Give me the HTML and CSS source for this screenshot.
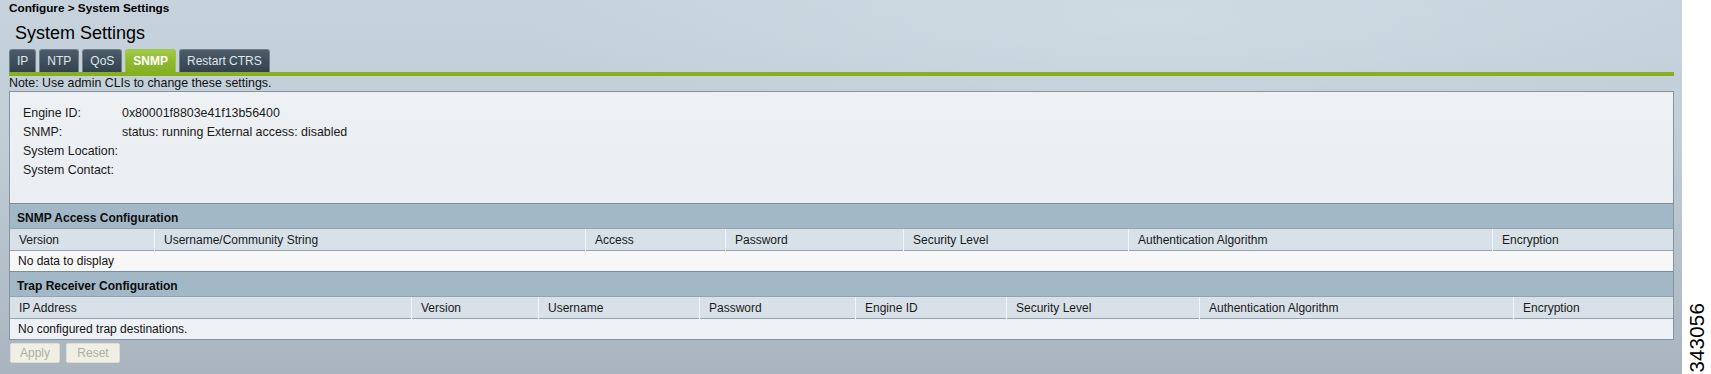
FILE: index.html
```html
<!DOCTYPE html>
<html>
<head>
<meta charset="utf-8">
<title>System Settings</title>
<link rel="stylesheet" href="styles.css">
</head>
<body>
<div class="shot">
  <div class="page">
    <div class="breadcrumb">Configure &gt; System Settings</div>
    <h1 class="title">System Settings</h1>
    <div class="tabs">
      <span class="tab">IP</span>
      <span class="tab">NTP</span>
      <span class="tab">QoS</span>
      <span class="tab active">SNMP</span>
      <span class="tab">Restart CTRS</span>
    </div>
    <div class="tabline"></div>
    <div class="note">Note: Use admin CLIs to change these settings.</div>
    <div class="box">
      <div class="info">
        <div class="lbl">Engine ID:</div><div class="val">0x80001f8803e41f13b56400</div>
        <div class="lbl">SNMP:</div><div class="val">status: running External access: disabled</div>
        <div class="lbl">System Location:</div><div class="val"></div>
        <div class="lbl">System Contact:</div><div class="val"></div>
      </div>
      <div class="sec-head">SNMP Access Configuration</div>
      <div class="cols cols-access">
        <div class="col">Version</div>
        <div class="col">Username/Community String</div>
        <div class="col">Access</div>
        <div class="col">Password</div>
        <div class="col">Security Level</div>
        <div class="col">Authentication Algorithm</div>
        <div class="col">Encryption</div>
      </div>
      <div class="empty empty-access">No data to display</div>
      <div class="sec-head">Trap Receiver Configuration</div>
      <div class="cols cols-trap">
        <div class="col">IP Address</div>
        <div class="col">Version</div>
        <div class="col">Username</div>
        <div class="col">Password</div>
        <div class="col">Engine ID</div>
        <div class="col">Security Level</div>
        <div class="col">Authentication Algorithm</div>
        <div class="col">Encryption</div>
      </div>
      <div class="empty empty-trap">No configured trap destinations.</div>
    </div>
    <div class="buttons">
      <button class="btn" disabled>Apply</button>
      <button class="btn" disabled>Reset</button>
    </div>
  </div>
  <div class="strip"><span class="fig-id">343056</span></div>
</div>
</body>
</html>
```

FILE: styles.css
```css
html, body {
  margin: 0;
  padding: 0;
  background: #ffffff;
}
body {
  font-family: "Liberation Sans", Arial, sans-serif;
  font-size: 12px;
  color: #111;
}
.shot {
  display: flex;
  width: 1711px;
  height: 374px;
  overflow: hidden;
}
.page {
  width: 1682px;
  height: 374px;
  box-sizing: border-box;
  padding: 0 8px 0 9px;
  background:
    radial-gradient(ellipse 900px 160px at 1150px 20px, rgba(214,226,233,0.55), rgba(214,226,233,0) 70%),
    linear-gradient(180deg, #c6d3dc 0%, #c1ced7 35%, #b6c3cd 65%, #a9b4bf 100%);
}
.breadcrumb {
  font-weight: bold;
  font-size: 11.75px;
  line-height: 15px;
  height: 15px;
  color: #000;
}
.title {
  margin: 7px 0 5px 6px;
  font-size: 18px;
  font-weight: normal;
  line-height: 22px;
  color: #000;
}
.tabs {
  display: flex;
  gap: 3px;
  height: 23px;
}
.tab {
  box-sizing: border-box;
  height: 23px;
  padding: 0 7px;
  border: 1px solid #6f808c;
  border-bottom: none;
  border-radius: 3px 3px 0 0;
  background: linear-gradient(180deg, #4b5b67 0%, #3e4e5a 55%, #33424d 100%);
  color: #dfe6eb;
  font-size: 12px;
  line-height: 22px;
}
.tab.active {
  border-color: #9fc544;
  background: linear-gradient(180deg, #a3c94a 0%, #8fba2f 50%, #86b126 100%);
  color: #ffffff;
  font-weight: bold;
}
.tabline {
  height: 4px;
  background: #86b01f;
}
.note {
  font-size: 12.4px;
  line-height: 14px;
  height: 14px;
  color: #111;
  margin-bottom: 1px;
}
.box {
  border: 1px solid #8495a1;
  background: #eef2f5;
}
.info {
  display: grid;
  grid-template-columns: 99px 1fr;
  grid-auto-rows: 19px;
  align-items: center;
  padding: 11px 13px 24px;
  height: 76px;
  font-size: 12.4px;
  background: linear-gradient(180deg, #edf1f4 0%, #eaeef2 100%);
  color: #1a1a1a;
}
.sec-head {
  box-sizing: border-box;
  height: 25px;
  padding-top: 2px;
  line-height: 24px;
  border-top: 1px solid #7b8c98;
  background: #a3b8c7;
  font-weight: bold;
  padding-left: 7px;
  color: #0d0d0d;
}
.cols {
  display: grid;
  height: 21px;
  background: #d9e1e8;
  border-top: 1px solid #93a4b0;
  border-bottom: 1px solid #96a3ad;
}
.cols-access {
  grid-template-columns: 144px 431px 140px 178px 225px 364px 1fr;
}
.cols-trap {
  grid-template-columns: 401px 127px 161px 156px 151px 193px 314px 1fr;
}
.col {
  line-height: 22px;
  padding-left: 9px;
  color: #1a1a1a;
  white-space: nowrap;
}
.col + .col {
  border-left: 1px solid #f3f6f8;
  padding-left: 9px;
}
.empty {
  height: 20px;
  line-height: 21px;
  padding-left: 8px;
  color: #111;
}
.empty-access {
  background: #f7f7f8;
}
.empty-trap {
  background: #eef2f6;
}
.buttons {
  display: flex;
  gap: 6px;
  margin-top: 3px;
  padding-left: 1px;
}
.btn {
  box-sizing: border-box;
  height: 20px;
  padding: 0 9px;
  border: 1px solid #dedccf;
  border-radius: 2px;
  background: #f0efe5;
  color: #adafa6;
  font-family: "Liberation Sans", Arial, sans-serif;
  font-size: 12px;
  line-height: 18px;
}
.btn:first-child {
  width: 50px;
}
.btn:last-child {
  width: 54px;
}
.strip {
  width: 29px;
  height: 374px;
  display: flex;
  flex-direction: column;
  justify-content: flex-end;
  align-items: center;
  padding-bottom: 1px;
  box-sizing: border-box;
  background: #ffffff;
}
.fig-id {
  writing-mode: vertical-rl;
  transform: rotate(180deg);
  font-size: 20.5px;
  line-height: 21px;
  color: #000;
  letter-spacing: 0.2px;
}
```
